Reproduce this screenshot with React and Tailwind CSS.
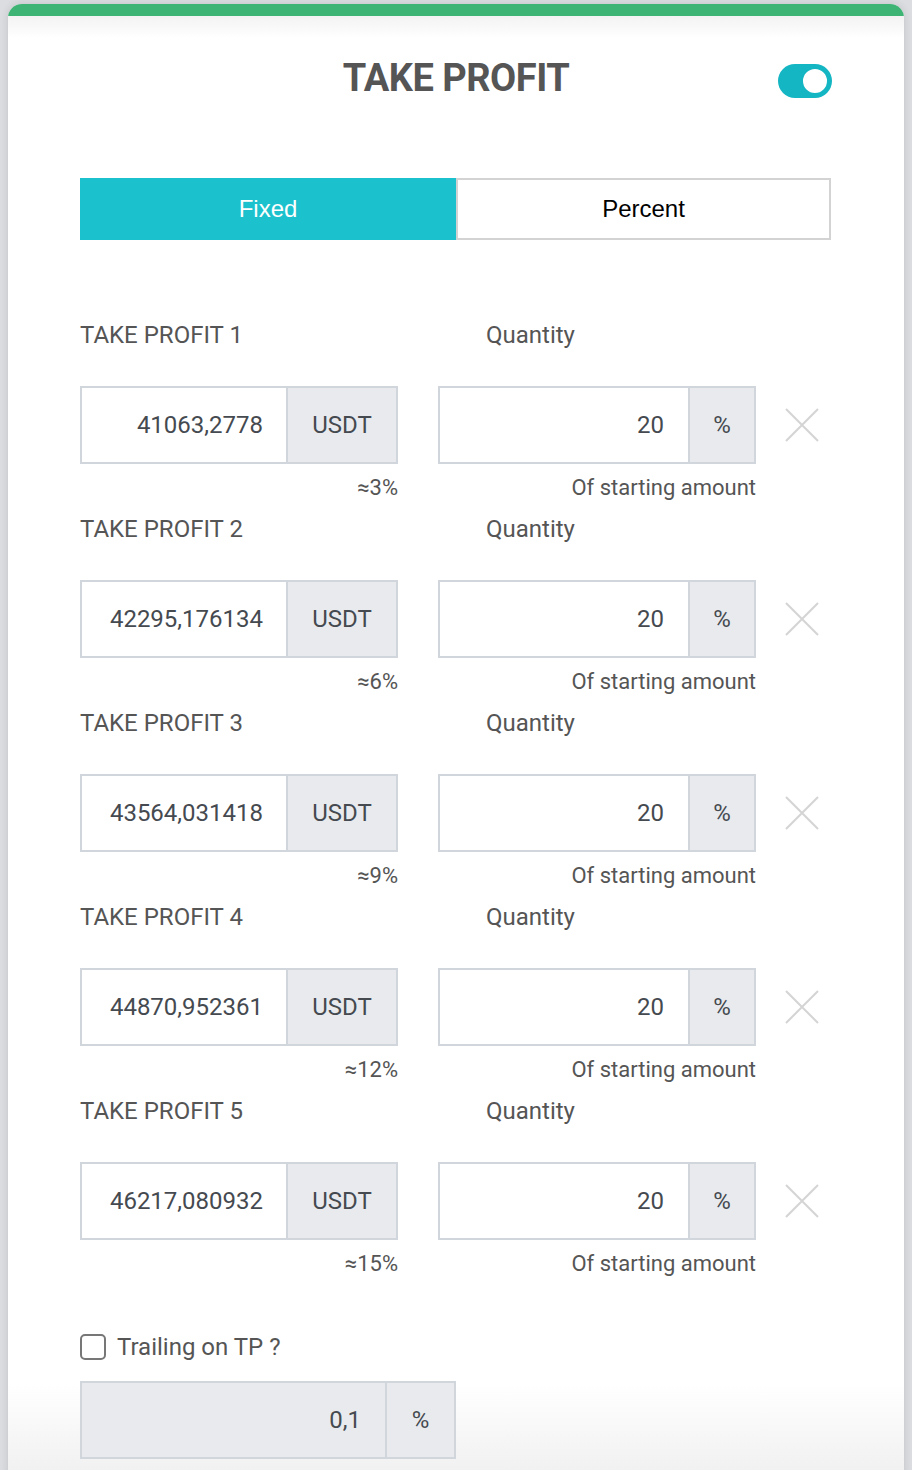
import React, { useState } from "react";

const rows = [
  { price: "41063,2778", pct: "≈3%" },
  { price: "42295,176134", pct: "≈6%" },
  { price: "43564,031418", pct: "≈9%" },
  { price: "44870,952361", pct: "≈12%" },
  { price: "46217,080932", pct: "≈15%" },
];

function CloseIcon() {
  return (
    <svg width="34" height="34" viewBox="0 0 34 34" className="shrink-0">
      <path d="M1 1 L33 33 M33 1 L1 33" stroke="#d4d4d4" strokeWidth="2" fill="none" />
    </svg>
  );
}

function TakeProfitRow({ index, price, pct }) {
  return (
    <div className="mb-[17px]">
      <div className="flex h-[26px] items-center text-[24px] text-[#555]">
        <div className="w-[406px]">TAKE PROFIT {index}</div>
        <div>Quantity</div>
      </div>

      <div className="mt-[38px] flex items-center">
        <div className="flex h-[78px] w-[318px] border-2 border-[#d1d6dc]">
          <div className="flex flex-1 items-center justify-end bg-white pr-[23px] text-[24px] text-[#454a50]">
            {price}
          </div>
          <div className="flex w-[110px] items-center justify-center border-l-2 border-[#d1d6dc] bg-[#e9eaee] text-[24px] text-[#454a50]">
            USDT
          </div>
        </div>

        <div className="ml-[40px] flex h-[78px] w-[318px] border-2 border-[#d1d6dc]">
          <div className="flex flex-1 items-center justify-end bg-white pr-[24px] text-[24px] text-[#454a50]">
            20
          </div>
          <div className="flex w-[66px] items-center justify-center border-l-2 border-[#d1d6dc] bg-[#e9eaee] text-[24px] text-[#454a50]">
            %
          </div>
        </div>

        <div className="ml-[29px]">
          <CloseIcon />
        </div>
      </div>

      <div className="mt-[11px] flex h-[24px] items-center text-[22px] text-[#555]">
        <div className="w-[318px] text-right">{pct}</div>
        <div className="ml-[40px] w-[318px] text-right">Of starting amount</div>
      </div>
    </div>
  );
}

export default function App() {
  const [mode, setMode] = useState("fixed");
  const [enabled, setEnabled] = useState(true);
  const [trailing, setTrailing] = useState(false);

  return (
    <div
      className="h-[1470px] overflow-hidden bg-[#dcdde0] px-[8px] pt-[4px]"
      style={{ fontFamily: "Roboto, 'Noto Sans', sans-serif" }}
    >
      <div className="h-[1520px] overflow-hidden rounded-t-[14px] bg-[linear-gradient(to_bottom,#ececec_0px,#ffffff_34px,#ffffff_1380px,#f1f1f1_1466px)] shadow-[0_0_8px_rgba(0,0,0,0.12)]">
        {/* green top bar */}
        <div className="h-[12px] bg-[#3db474]" />

        <div className="px-[72px] pt-[32px]">
          {/* Header */}
          <div className="relative flex h-[60px] items-center justify-center">
            <h1 className="text-[38px] font-bold tracking-[-0.5px] text-[#555]">TAKE PROFIT</h1>
            <button
              onClick={() => setEnabled(!enabled)}
              className={`absolute right-0 top-[16px] flex h-[34px] w-[54px] items-center rounded-full px-[3px] ${
                enabled ? "justify-end bg-[#15b6c3]" : "justify-start bg-[#ccc]"
              }`}
            >
              <span className="h-[28px] w-[28px] rounded-full border-2 border-[#15b6c3] bg-white" />
            </button>
          </div>

          {/* Tabs */}
          <div
            className="mt-[70px] flex h-[62px] w-[751px]"
            style={{ fontFamily: "'Liberation Sans', Arial, sans-serif" }}
          >
            <button
              onClick={() => setMode("fixed")}
              className={`w-[376px] text-[24px] ${
                mode === "fixed" ? "bg-[#1bc2cd] text-white" : "border-2 border-[#d3d3d3] bg-white text-black"
              }`}
            >
              Fixed
            </button>
            <button
              onClick={() => setMode("percent")}
              className={`flex-1 text-[24px] ${
                mode === "percent" ? "bg-[#1bc2cd] text-white" : "border-2 border-[#d3d3d3] bg-white text-black"
              }`}
            >
              Percent
            </button>
          </div>

          {/* Take profit rows */}
          <div className="mt-[82px]">
            {rows.map((r, i) => (
              <TakeProfitRow key={i} index={i + 1} price={r.price} pct={r.pct} />
            ))}
          </div>

          {/* Trailing */}
          <div className="mt-[59px] flex h-[26px] items-center gap-[11px]">
            <button
              onClick={() => setTrailing(!trailing)}
              className="h-[26px] w-[26px] rounded-[5px] border-2 border-[#777] bg-white"
            />
            <span className="text-[24px] text-[#555]">Trailing on TP ?</span>
          </div>

          <div className="mt-[21px] flex h-[78px] w-[376px] border-2 border-[#d1d6dc] bg-[#e9eaee]">
            <div className="flex flex-1 items-center justify-end pr-[24px] text-[24px] text-[#454a50]">0,1</div>
            <div className="flex w-[69px] items-center justify-center border-l-2 border-[#d1d6dc] text-[24px] text-[#454a50]">
              %
            </div>
          </div>
        </div>
      </div>
    </div>
  );
}
